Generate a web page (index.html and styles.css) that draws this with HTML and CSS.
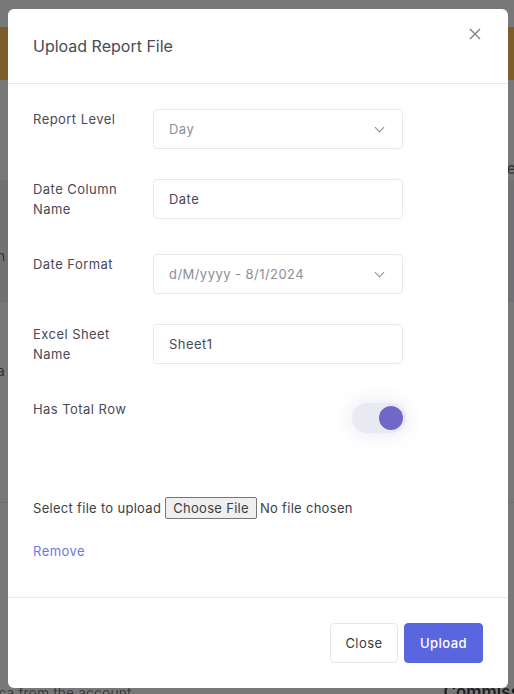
FILE: index.html
```html
<!DOCTYPE html>
<html lang="en">
<head>
    <meta charset="UTF-8">
    <title>Upload Report File</title>
    <link rel="stylesheet" href="styles.css">
</head>
<body>

<!-- page behind the dialog (dimmed) -->
<div class="page">
    <div class="page-banner"></div>
    <div class="page-row row-a"><span class="frag-right">e</span></div>
    <div class="page-row row-b"><span class="frag-left">n</span></div>
    <div class="page-row row-c"><span class="frag-left">a</span></div>
    <div class="page-foot">
        <span class="foot-left">tca from the account</span>
        <span class="foot-right">Commiss</span>
    </div>
</div>

<div class="modal">
    <div class="modal-header">
        <h2 class="modal-title">Upload Report File</h2>
        <button class="modal-close" type="button" aria-label="Close">
            <svg width="12" height="12" viewBox="0 0 12 12"><path d="M1 1L11 11M11 1L1 11" stroke="#7d7d86" stroke-width="1.3" fill="none"/></svg>
        </button>
    </div>

    <form class="modal-body" id="uploadForm">
        <div class="form-row">
            <label class="form-label" for="reportLevel">Report Level</label>
            <div class="select-wrap">
                <select id="reportLevel" class="form-control muted">
                    <option>Day</option>
                    <option>Week</option>
                    <option>Month</option>
                </select>
            </div>
        </div>

        <div class="form-row">
            <label class="form-label" for="dateColumn">Date Column<br>Name</label>
            <input type="text" id="dateColumn" class="form-control" value="Date">
        </div>

        <div class="form-row">
            <label class="form-label" for="dateFormat">Date Format</label>
            <div class="select-wrap">
                <select id="dateFormat" class="form-control muted">
                    <option>d/M/yyyy - 8/1/2024</option>
                    <option>M/d/yyyy - 1/8/2024</option>
                </select>
            </div>
        </div>

        <div class="form-row">
            <label class="form-label" for="sheetName">Excel Sheet<br>Name</label>
            <input type="text" id="sheetName" class="form-control" value="Sheet1">
        </div>

        <div class="form-row">
            <span class="form-label">Has Total Row</span>
            <label class="switch">
                <input type="checkbox" checked>
                <span class="switch-track"><span class="switch-knob"></span></span>
            </label>
        </div>

        <div class="file-row">
            <label for="reportFile">Select file to upload</label>
            <input type="file" id="reportFile" class="file-input">
        </div>

        <a href="#" class="remove-link">Remove</a>
    </form>

    <div class="modal-footer">
        <button type="button" class="btn btn-light">Close</button>
        <button type="submit" form="uploadForm" class="btn btn-primary">Upload</button>
    </div>
</div>

</body>
</html>
```

FILE: styles.css
```css
/* page + dim backdrop */
body {
    margin: 0;
    font-family: Inter, "Noto Sans", sans-serif;
    background-color: #787878;
    height: 694px;
    overflow: hidden;
}

.page {
    position: fixed;
    inset: 0;
    z-index: 0;
    color: #2f2f35;
}

.page-banner {
    margin-top: 27px;
    height: 53px;
    background-color: #7b5e2a;
}

.page-row {
    position: relative;
    border-bottom: 1px solid #6f6f72;
}

.row-a { height: 100px; }
.row-b { height: 120px; background-color: #727275; }
.row-c { height: 200px; }

.frag-right {
    position: absolute;
    right: -2px;
    top: 78px;
    font-size: 16px;
}

.frag-left {
    position: absolute;
    left: -3px;
    top: 66px;
    font-size: 14px;
}

.row-c .frag-left { top: 60px; }

.page-foot {
    position: absolute;
    left: 0;
    right: 0;
    bottom: -10px;
    height: 18px;
    font-size: 14px;
}

.foot-left {
    position: absolute;
    left: -6px;
    top: -2px;
    color: #3a3a40;
}

.foot-right {
    position: absolute;
    right: -6px;
    top: -4px;
    font-size: 17px;
    font-weight: 600;
    color: #1e1e22;
}

/* dialog */
.modal {
    position: relative;
    z-index: 1;
    width: 500px;
    margin: 9px 0 0 8px;
    background-color: #fff;
    border-radius: 6px;
    color: #4a4a55;
    letter-spacing: 0.45px;
}

.modal-header {
    height: 75px;
    border-bottom: 1px solid #e8e8ee;
    padding: 0 25px;
    display: flex;
    justify-content: space-between;
    align-items: flex-start;
    box-sizing: border-box;
}

.modal-title {
    margin: 27px 0 0;
    font-size: 16px;
    font-weight: 400;
    letter-spacing: 0;
    color: #4a4a55;
}

.modal-close {
    margin-top: 19px;
    margin-right: 2px;
    padding: 0;
    border: none;
    background: none;
    cursor: pointer;
}

.modal-body {
    padding: 25px 25px 0;
    display: flex;
    flex-direction: column;
}

.form-row {
    display: grid;
    grid-template-columns: 120px 250px;
    align-items: start;
    margin-bottom: 30px;
}

.form-label {
    font-size: 13px;
    line-height: 20px;
    padding-bottom: 5px;
    color: #4a4a55;
}

.form-control {
    box-sizing: border-box;
    width: 250px;
    height: 40px;
    padding: 0 15px;
    border: 1px solid #e8e8f0;
    border-radius: 4px;
    font-family: inherit;
    font-size: 13px;
    letter-spacing: inherit;
    color: #4a4a55;
    background-color: #fff;
    outline: none;
}

.form-control.muted {
    color: #8d8d98;
}

.select-wrap {
    position: relative;
}

select.form-control {
    appearance: none;
}

.select-wrap::after {
    content: "";
    position: absolute;
    right: 20px;
    top: 15px;
    width: 6px;
    height: 6px;
    border-right: 1px solid #8d8d98;
    border-bottom: 1px solid #8d8d98;
    transform: rotate(45deg);
}

/* toggle */
.switch {
    justify-self: end;
    margin-right: -3px;
    margin-top: 4px;
}

.switch input {
    display: none;
}

.switch-track {
    display: flex;
    justify-content: flex-end;
    align-items: center;
    width: 54px;
    height: 30px;
    padding: 0 3px;
    box-sizing: border-box;
    border-radius: 15px;
    background-color: #e9e9f1;
    box-shadow: 0 0 18px rgba(111, 102, 200, 0.18);
}

.switch-knob {
    width: 24px;
    height: 24px;
    border-radius: 50%;
    background-color: #6f68c9;
}

/* file picker */
.file-row {
    margin-top: 34px;
    display: flex;
    align-items: center;
    gap: 4px;
    font-size: 13px;
    letter-spacing: 0.3px;
    color: #3d3d45;
}

.file-input {
    font-family: inherit;
    font-size: 13px;
    letter-spacing: inherit;
    color: #3d3d45;
}

.file-input::file-selector-button {
    font-family: inherit;
    font-size: 13px;
    letter-spacing: inherit;
    color: #3d3d45;
    height: 22px;
    padding: 0 7px;
    margin-right: 3px;
    border: 1px solid #767676;
    border-radius: 2px;
    background-color: #efefef;
}

.remove-link {
    margin-top: 24px;
    margin-bottom: 38px;
    font-size: 13px;
    color: #6b77e8;
    text-decoration: none;
    align-self: flex-start;
}

/* footer */
.modal-footer {
    border-top: 1px solid #e8e8ee;
    padding: 25px;
    display: flex;
    justify-content: flex-end;
    gap: 6px;
}

.btn {
    height: 40px;
    padding: 0;
    border-radius: 4px;
    font-family: inherit;
    font-size: 13px;
    letter-spacing: inherit;
    cursor: pointer;
}

.btn-light {
    width: 68px;
    background-color: #fff;
    border: 1px solid #e6e6ee;
    color: #3a3a42;
}

.btn-primary {
    width: 79px;
    background-color: #5a66e0;
    border: 1px solid #5a66e0;
    color: #fff;
    font-weight: 500;
}
```
